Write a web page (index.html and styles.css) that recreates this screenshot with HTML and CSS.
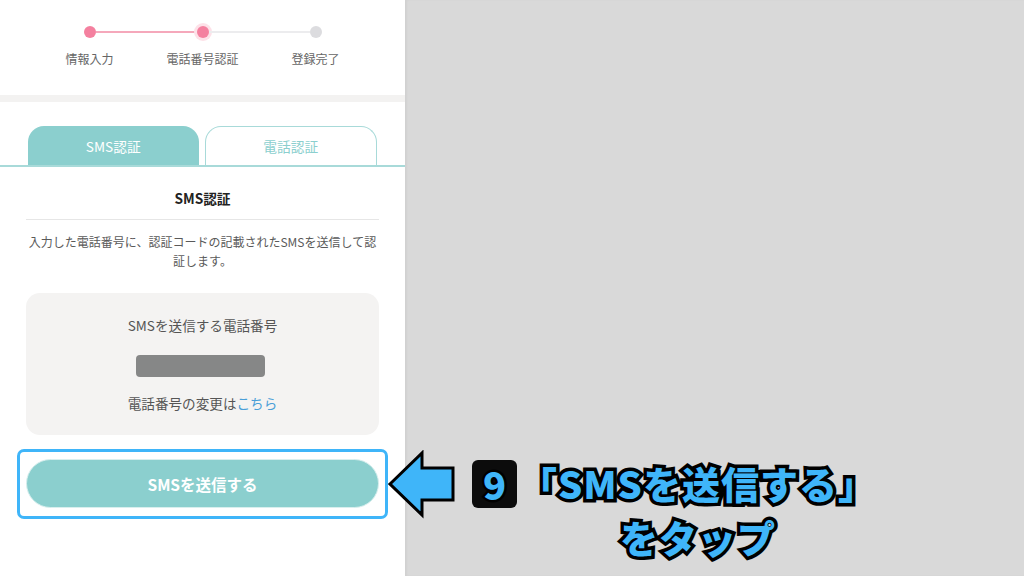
FILE: index.html
```html
<!DOCTYPE html>
<html lang="ja">
<head>
<meta charset="utf-8">
<title>SMS認証</title>
<link rel="stylesheet" href="styles.css">
</head>
<body>
<div class="screen">
  <main class="phone">
    <section class="stepper">
      <div class="step">
        <div class="track"><span class="seg seg-none"></span><span class="dot dot-done"></span><span class="seg seg-pink"></span></div>
        <div class="step-label">情報入力</div>
      </div>
      <div class="step">
        <div class="track"><span class="seg seg-pink"></span><span class="dot dot-current"></span><span class="seg seg-gray"></span></div>
        <div class="step-label">電話番号認証</div>
      </div>
      <div class="step">
        <div class="track"><span class="seg seg-gray"></span><span class="dot dot-todo"></span><span class="seg seg-none"></span></div>
        <div class="step-label">登録完了</div>
      </div>
    </section>
    <div class="band"></div>
    <nav class="tabs">
      <div class="tab tab-active">SMS認証</div>
      <div class="tab tab-idle">電話認証</div>
    </nav>
    <section class="content">
      <h2 class="title">SMS認証</h2>
      <p class="desc">入力した電話番号に、認証コードの記載されたSMSを送信して認証します。</p>
      <div class="numbox">
        <div class="numbox-label">SMSを送信する電話番号</div>
        <div class="masked"></div>
        <div class="numbox-change">電話番号の変更は<span class="link">こちら</span></div>
      </div>
      <div class="highlight">
        <button class="send">SMSを送信する</button>
      </div>
    </section>
  </main>
  <div class="stage"></div>
  <div class="annotation">
    <svg class="arrow" width="70" height="70" viewBox="0 0 70 70">
      <path d="M2 34 L34 3 L34 18 L65 18 L65 50 L34 50 L34 65 Z" fill="#3fb5f9" stroke="#000" stroke-width="3" stroke-linejoin="miter"/>
    </svg>
    <div class="badge"><span>9</span></div>
    <div class="caption">
      <div class="cap-line">「SMSを送信する」</div>
      <div class="cap-line">をタップ</div>
    </div>
  </div>
</div>
</body>
</html>
```
FILE: styles.css
```css
* { box-sizing: border-box; }
html, body { margin: 0; padding: 0; }
body {
  width: 1024px;
  height: 576px;
  overflow: hidden;
  font-family: "Noto Sans CJK JP", "Noto Sans", sans-serif;
  color: #555;
}
.screen {
  position: relative;
  display: flex;
  width: 1024px;
  height: 576px;
}
.phone {
  width: 405px;
  height: 576px;
  background: #fff;
  flex: none;
}
.stage {
  flex: 1;
  background: #d9d9d9;
  box-shadow: inset 2px 0 2px rgba(0,0,0,0.04);
}

/* stepper */
.stepper {
  display: grid;
  grid-template-columns: repeat(3, 113px);
  justify-content: center;
  padding-top: 23px;
  height: 95px;
}
.step { display: flex; flex-direction: column; align-items: center; }
.track { display: flex; align-items: center; width: 100%; height: 18px; }
.seg { flex: 1; height: 2px; }
.seg-none { background: transparent; }
.seg-pink { background: #f5a8bb; }
.seg-gray { background: #ececee; }
.dot { width: 12px; height: 12px; border-radius: 50%; flex: none; }
.dot-done { background: #f4809f; }
.dot-current { background: #f4809f; box-shadow: 0 0 0 3px #fde1e8; }
.dot-todo { background: #dcdcdf; }
.step-label {
  margin-top: 10px;
  font-size: 12px;
  line-height: 16px;
  color: #666;
}

.band { height: 7px; background: #f3f2f1; }

/* tabs */
.tabs {
  display: flex;
  gap: 6px;
  padding: 24px 28px 0;
  border-bottom: 2px solid #a8dad9;
}
.tab {
  flex: 1;
  height: 39px;
  border-radius: 16px 16px 0 0;
  display: flex;
  align-items: center;
  justify-content: center;
  font-size: 13.7px;
}
.tab-active { background: #8bcfce; color: #fff; }
.tab-idle { border: 1px solid #a8dad9; border-bottom: none; color: #8bcfce; background: #fff; }

/* content */
.content { padding: 0 26px; }
.title {
  margin: 22px 0 0;
  padding-bottom: 12px;
  border-bottom: 1px solid #e6e6e6;
  font-size: 13.7px;
  line-height: 18px;
  font-weight: 700;
  color: #222;
  text-align: center;
}
.desc {
  margin: 12px 0 0;
  font-size: 12px;
  line-height: 19px;
  color: #5a5a5a;
  text-align: center;
}
.numbox {
  margin-top: 23px;
  height: 142px;
  background: #f4f3f2;
  border-radius: 14px;
  padding-top: 23px;
  display: flex;
  flex-direction: column;
  align-items: center;
  font-size: 13.6px;
  line-height: 18px;
  color: #555;
}
.masked {
  margin-top: 21px;
  margin-right: 5px;
  width: 129px;
  height: 22px;
  border-radius: 4px;
  background: #868787;
}
.numbox-change { margin-top: 17px; }
.link { color: #4a9fd8; }

.highlight {
  margin: 14px -9px 0;
  border: 3px solid #3fb5f9;
  border-radius: 7px;
  padding: 7px 6px 8px;
}
.send {
  display: block;
  width: 100%;
  height: 49px;
  border: 1px solid #d8efee;
  border-radius: 25px;
  background: #8bcfce;
  color: #fff;
  font-family: "Noto Sans CJK JP", sans-serif;
  font-size: 15.5px;
  font-weight: 700;
  cursor: pointer;
}

/* annotation overlay */
.annotation {
  position: absolute;
  left: 388px;
  top: 450px;
  display: flex;
  align-items: flex-start;
}
.arrow { flex: none; }
.badge {
  margin: 10px 0 0 14px;
  width: 45px;
  height: 48px;
  background: #0c0c0c;
  border-radius: 6px;
  display: flex;
  align-items: center;
  justify-content: center;
}
.badge span {
  font-family: "Noto Sans CJK JP", sans-serif;
  font-weight: 900;
  font-size: 38px;
  line-height: 1;
  color: #3fb5f9;
  -webkit-text-stroke: 5px #000;
  paint-order: stroke fill;
}
.caption {
  margin: 6px 0 0 2px;
  display: flex;
  flex-direction: column;
  align-items: center;
}
.cap-line {
  font-family: "Noto Sans CJK JP", sans-serif;
  font-weight: 900;
  font-size: 38px;
  line-height: 54px;
  letter-spacing: 1px;
  color: #3fb5f9;
  -webkit-text-stroke: 7px #000;
  paint-order: stroke fill;
  white-space: nowrap;
}
```
